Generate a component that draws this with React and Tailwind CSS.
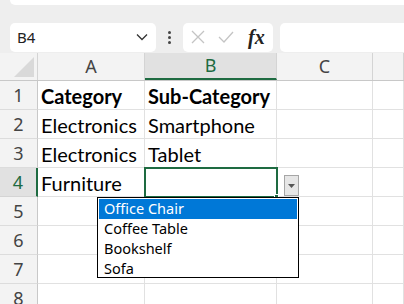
import React from 'react';

const cols = [
    { key: 'A', w: 'w-[107px]' },
    { key: 'B', w: 'w-[132px]' },
    { key: 'C', w: 'w-[96px]' },
    { key: '', w: 'flex-1' },
];

const rows = [
    ['Category', 'Sub-Category', '', ''],
    ['Electronics', 'Smartphone', '', ''],
    ['Electronics', 'Tablet', '', ''],
    ['Furniture', '', '', ''],
    ['', '', '', ''],
    ['', '', '', ''],
    ['', '', '', ''],
    ['', '', '', ''],
];

const options = ['Office Chair', 'Coffee Table', 'Bookshelf', 'Sofa'];

function Toolbar() {
    return (
        <div className="bg-[#eeeeee] h-[53px] relative">
            <div className="absolute left-[10px] right-0 top-0 h-[5px] bg-white rounded-bl-[6px]"></div>
            <div className="flex items-center pt-[15px] pl-[10px] h-[44px] box-content">
                <div className="w-[146px] h-[29px] bg-white rounded-[5px] flex items-center justify-between pl-[7px] pr-[8px]">
                    <span className="text-[15px] text-[#222] font-['Noto_Sans',sans-serif]">B4</span>
                    <svg width="12" height="8" viewBox="0 0 12 8" fill="none">
                        <path d="M1 1.5 L6 6.5 L11 1.5" stroke="#333" strokeWidth="1.3" />
                    </svg>
                </div>
                <div className="w-[27px] flex flex-col items-center gap-[2px]">
                    <span className="w-[3px] h-[3px] bg-[#444] rounded-full"></span>
                    <span className="w-[3px] h-[3px] bg-[#444] rounded-full"></span>
                    <span className="w-[3px] h-[3px] bg-[#444] rounded-full"></span>
                </div>
                <div className="w-[90px] h-[29px] bg-white rounded-[5px] flex items-center pl-[8px] gap-[13px]">
                    <svg width="14" height="14" viewBox="0 0 14 14" fill="none">
                        <path d="M1 1 L13 13 M13 1 L1 13" stroke="#c4c4c4" strokeWidth="1.3" />
                    </svg>
                    <svg width="16" height="12" viewBox="0 0 16 12" fill="none">
                        <path d="M1 6 L6 11 L15 1" stroke="#c4c4c4" strokeWidth="1.3" />
                    </svg>
                    <span className="text-[20px] italic font-semibold text-[#222] font-['Liberation_Serif',serif] ml-[1px] leading-none">fx</span>
                </div>
                <div className="ml-[7px] flex-1 h-[29px] bg-white rounded-l-[5px]"></div>
            </div>
        </div>
    );
}

export default function App() {
    return (
        <div className="w-[404px] h-[304px] overflow-hidden bg-white relative">
            <Toolbar />
            <div className="flex h-[28px] bg-[#f3f3f3] border-b border-[#c8c8c8]">
                <div className="w-[38px] border-r border-[#d4d4d4] relative">
                    <svg className="absolute right-[3px] bottom-[3px]" width="20" height="20" viewBox="0 0 20 20">
                        <path d="M20 0 L20 20 L0 20 Z" fill="#d9d9d9" />
                    </svg>
                </div>
                {cols.map((c, j) => (
                    <div
                        key={j}
                        className={`${c.w} shrink-0 border-r border-[#d4d4d4] flex items-center justify-center text-[18px] font-['Noto_Sans',sans-serif] ${c.key === 'B' ? 'bg-[#e1e1e1] text-[#1e6b41] border-b-2 border-b-[#1e6b41]' : 'text-[#444]'}`}
                    >
                        {c.key}
                    </div>
                ))}
            </div>
            {rows.map((r, i) => (
                <div key={i} className="flex h-[29px]">
                    <div
                        className={`w-[38px] shrink-0 flex items-center justify-center text-[18px] font-['Noto_Sans',sans-serif] border-b ${i === 3 ? 'bg-[#e1e1e1] text-[#1e6b41] border-r-2 border-r-[#1e6b41] border-b-[#d4d4d4]' : 'bg-[#f3f3f3] text-[#444] border-r border-r-[#c8c8c8] border-b-[#dcdcdc]'}`}
                    >
                        {i + 1}
                    </div>
                    {cols.map((c, j) => (
                        <div
                            key={j}
                            className={`${c.w} shrink-0 border-r border-b border-[#e1e1e1] flex items-center pl-[3px] pt-[2px] text-[20px] text-black font-['Lato',sans-serif] whitespace-nowrap ${i === 0 ? 'font-bold' : ''}`}
                        >
                            {r[j]}
                        </div>
                    ))}
                </div>
            ))}

            {/* selected cell B4 */}
            <div className="absolute left-[144px] top-[167px] w-[134px] h-[31px] border-2 border-[#1e6b41]"></div>
            <div className="absolute left-[274px] top-[194px] w-[5px] h-[5px] bg-[#1e6b41] border border-white"></div>

            {/* dropdown button */}
            <div className="absolute left-[284px] top-[175px] w-[15px] h-[21px] bg-[#e6e6e6] border border-[#a6a6a6] flex items-center justify-center">
                <svg width="7" height="4" viewBox="0 0 7 4">
                    <path d="M0 0 L7 0 L3.5 4 Z" fill="#555" />
                </svg>
            </div>

            {/* list */}
            <div className="absolute left-[97px] top-[197px] w-[202px] h-[81px] bg-white border border-black p-px">
                {options.map((o, i) => (
                    <div
                        key={o}
                        className={`h-[20px] flex items-center pl-[5px] text-[14.5px] font-['Noto_Sans',sans-serif] ${i === 0 ? 'bg-[#0078d7] text-white' : 'text-black'}`}
                    >
                        {o}
                    </div>
                ))}
            </div>
        </div>
    );
}
